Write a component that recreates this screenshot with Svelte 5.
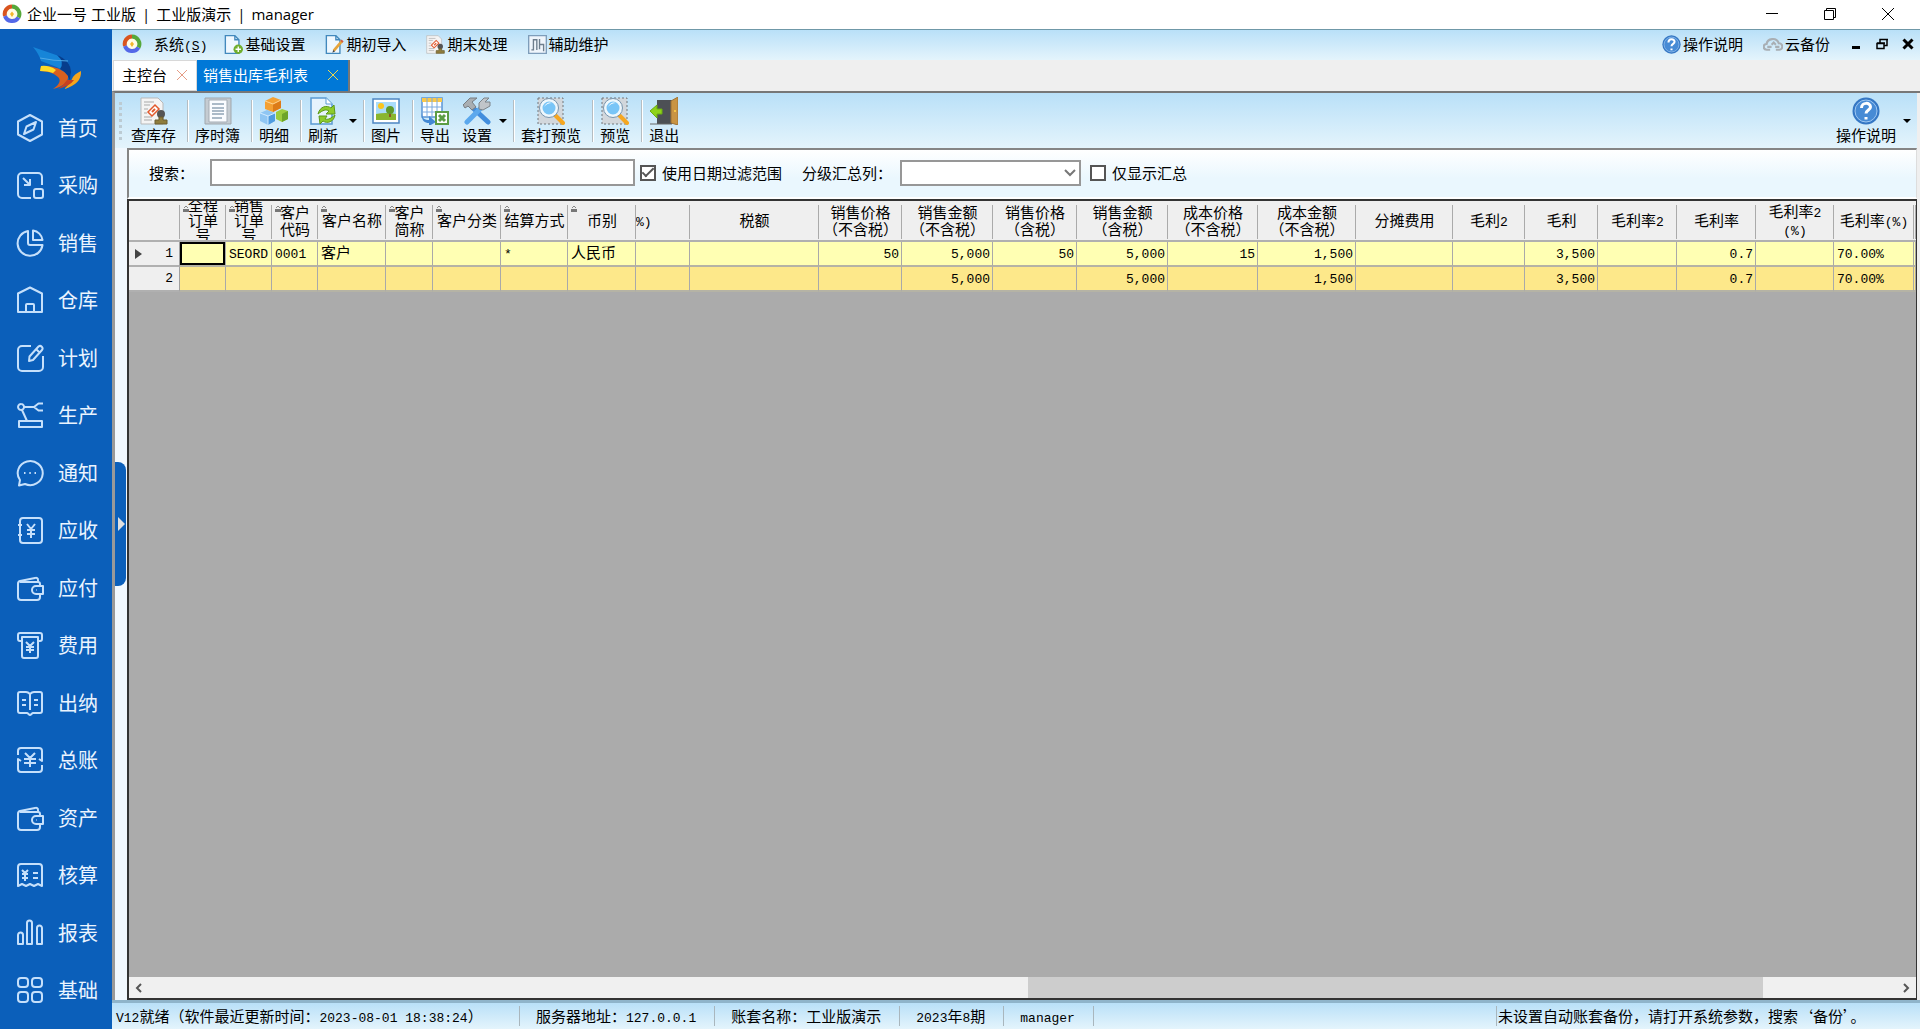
<script lang="ts">
	interface Column {
		lines: string[];
		width: number;
		locked?: boolean;
		numeric?: boolean;
		start?: boolean;
	}

	interface Tool {
		label: string;
		icon: string;
		drop?: boolean;
		tight?: boolean;
		joined?: boolean;
	}

	const modules = [
		{ label: '首页', d: 'M14 1 26 7.500V20.500L14 27 2 20.500V7.500ZM20 8 17.500 15.500 8 20 10.500 12.500ZM14 14h.1' },
		{ label: '采购', d: 'M26 14V6a4 4 0 0 0-4-4H6a4 4 0 0 0-4 4v17a4 4 0 0 0 4 4h9M7 7l7 7M14 8v6H8M20 18h5a2 2 0 0 1 2 2v5a2 2 0 0 1-2 2h-5a2 2 0 0 1-2-2v-5a2 2 0 0 1 2-2Z' },
		{ label: '销售', d: 'M12 2A12.500 12.500 0 1 0 26.500 16H14a2 2 0 0 1-2-2ZM17 1.500V11h9.500A11 11 0 0 0 17 1.500Z' },
		{ label: '仓库', d: 'M14 1.500 26 7.500V26H2V7.500ZM10 26v-7a1 1 0 0 1 1-1h6a1 1 0 0 1 1 1v7' },
		{ label: '计划', d: 'M15 2H6a4 4 0 0 0-4 4v17a4 4 0 0 0 4 4h17a4 4 0 0 0 4-4V12M22.500 2.500a2.500 2.500 0 0 1 3.500 3.500L17 16l-4 1 .5-4.500ZM20 5l4 4' },
		{ label: '生产', d: 'M3 20h23v6H3ZM5 3a3 3 0 1 0 .1 0M8 6h10M6 9l5 11M27 2.500h-4.500l-4.500 3.500 4.500 3.500H27' },
		{ label: '通知', d: 'M3 26.500 4 21A12.500 12 0 1 1 9 25ZM8 14h1.500M13.300 14h1.500M18.500 14h1.500' },
		{ label: '应收', d: 'M7 2h16a3 3 0 0 1 3 3v19a3 3 0 0 1-3 3H7a3 3 0 0 1-3-3V5a3 3 0 0 1 3-3ZM2 9h4M2 19h4M11 8l4 5 4-5M11 14h8M11 18h8M15 13v9' },
		{ label: '应付', d: 'M22 8V6a2 2 0 0 0-3-2L4 7a3 3 0 0 0-2 3v13a3 3 0 0 0 3 3h16a3 3 0 0 0 3-3v-3M4 8h18a2 2 0 0 1 2 2v2M27 12h-7a4 4 0 0 0 0 8h7ZM20 16h.5' },
		{ label: '费用', d: 'M6 10H4a2 2 0 0 1-2-2V4a2 2 0 0 1 2-2h20a2 2 0 0 1 2 2v4a2 2 0 0 1-2 2h-2M6 6h16v19a2 2 0 0 1-2 2H8a2 2 0 0 1-2-2ZM10 11l4 4 4-4M10 16h8M10 19h8M14 15v7' },
		{ label: '出纳', d: 'M14 5c-1-1-2-2-4-2H4a2 2 0 0 0-2 2v17a2 2 0 0 0 2 2h7c1 0 2 2 3 2s2-2 3-2h7a2 2 0 0 0 2-2V5a2 2 0 0 0-2-2h-6c-2 0-3 1-4 2ZM14 5v16M6 11h4M6 16h4M18 11h4M18 16h4' },
		{ label: '总账', d: 'M2 9V5a3 3 0 0 1 3-3h18a3 3 0 0 1 3 3v10l-3-2M26 19v4a3 3 0 0 1-3 3H5a3 3 0 0 1-3-3V13l3 2M9 7l5 5 5-5M8 13h12M8 17h12M14 12v9' },
		{ label: '资产', d: 'M22 8V6a2 2 0 0 0-3-2L4 7a3 3 0 0 0-2 3v13a3 3 0 0 0 3 3h16a3 3 0 0 0 3-3v-3M4 8h18a2 2 0 0 1 2 2v2M27 12h-7a4 4 0 0 0 0 8h7ZM20 16h.5' },
		{ label: '核算', d: 'M2 25V6a3 3 0 0 1 3-3h18a3 3 0 0 1 3 3v19l-4-2-4 2-4-2-4 2-4-2ZM6 9l3 3 3-3M6 13h6M6 17h6M9 12v8M17 12h5M17 17h5' },
		{ label: '报表', d: 'M2 16a2 2 0 0 1 5 0v9H2ZM11 4a2 2 0 0 1 5 0v21h-5ZM21 9a2 2 0 0 1 5 0v16h-5Z' },
		{ label: '基础', d: 'M5 2h4a3 3 0 0 1 3 3v3a3 3 0 0 1-3 3H5a3 3 0 0 1-3-3V5a3 3 0 0 1 3-3ZM19 2h4a3 3 0 0 1 3 3v3a3 3 0 0 1-3 3h-4a3 3 0 0 1-3-3V5a3 3 0 0 1 3-3ZM5 16h4a3 3 0 0 1 3 3v4a3 3 0 0 1-3 3H5a3 3 0 0 1-3-3v-4a3 3 0 0 1 3-3ZM19 16h4a3 3 0 0 1 3 3v4a3 3 0 0 1-3 3h-4a3 3 0 0 1-3-3v-4a3 3 0 0 1 3-3Z' }
	];

	const menus = [
		{ label: '基础设置', icon: 'page-add' },
		{ label: '期初导入', icon: 'page-edit' },
		{ label: '期末处理', icon: 'stamp' },
		{ label: '辅助维护', icon: 'wave' }
	];

	const tools: Tool[] = [
		{ label: '查库存', icon: 'stamp' },
		{ label: '序时簿', icon: 'journal' },
		{ label: '明细', icon: 'cubes' },
		{ label: '刷新', icon: 'refresh', drop: true },
		{ label: '图片', icon: 'picture' },
		{ label: '导出', icon: 'export', joined: true },
		{ label: '设置', icon: 'settings', drop: true, tight: true },
		{ label: '套打预览', icon: 'preview' },
		{ label: '预览', icon: 'preview' },
		{ label: '退出', icon: 'exit', joined: true }
	];

	const columns: Column[] = [
		{ lines: ['全程', '订单', '号'], width: 46, locked: true },
		{ lines: ['销售', '订单', '号'], width: 46, locked: true },
		{ lines: ['客户', '代码'], width: 46, locked: true },
		{ lines: ['客户名称'], width: 68, locked: true },
		{ lines: ['客户', '简称'], width: 47, locked: true },
		{ lines: ['客户分类'], width: 68, locked: true },
		{ lines: ['结算方式'], width: 67, locked: true },
		{ lines: ['币别'], width: 68, locked: true },
		{ lines: ['%)'], width: 54, numeric: true, start: true },
		{ lines: ['税额'], width: 129, numeric: true },
		{ lines: ['销售价格', '（不含税）'], width: 83, numeric: true },
		{ lines: ['销售金额', '（不含税）'], width: 91, numeric: true },
		{ lines: ['销售价格', '（含税）'], width: 84, numeric: true },
		{ lines: ['销售金额', '（含税）'], width: 91, numeric: true },
		{ lines: ['成本价格', '（不含税）'], width: 90, numeric: true },
		{ lines: ['成本金额', '（不含税）'], width: 98, numeric: true },
		{ lines: ['分摊费用'], width: 97, numeric: true },
		{ lines: ['毛利2'], width: 72, numeric: true },
		{ lines: ['毛利'], width: 73, numeric: true },
		{ lines: ['毛利率2'], width: 79, numeric: true },
		{ lines: ['毛利率'], width: 79, numeric: true },
		{ lines: ['毛利率2', '(%)'], width: 78, numeric: true },
		{ lines: ['毛利率(%)'], width: 80 }
	];

	const rows = [
		['', 'SEORD', '0001', '客户', '', '', '*', '人民币', '', '', '50', '5,000', '50', '5,000', '15', '1,500', '', '', '3,500', '', '0.7', '', '70.00%'],
		['', '', '', '', '', '', '', '', '', '', '', '5,000', '', '5,000', '', '1,500', '', '', '3,500', '', '0.7', '', '70.00%']
	];

	let keyword = $state('');
	let useDateRange = $state(true);
	let summaryOnly = $state(false);
	let selected = $state('0-0');

	// half-width runs use the narrower fixed-pitch face
	function runs(text: string) {
		return (text.match(/[\x20-\x7e]+|[^\x20-\x7e]+/g) ?? []).map((value) => ({
			value,
			half: /^[\x20-\x7e]/.test(value)
		}));
	}
</script>

{#snippet label(text: string)}
	{#each runs(text) as run}{#if run.half}<span class="half">{run.value}</span>{:else}{run.value}{/if}{/each}
{/snippet}

{#snippet ring(size: number)}
	<svg width={size} height={size} viewBox="0 0 20 20" fill="none" stroke-width="4" aria-hidden="true">
		<circle cx="10" cy="10" r="7" fill="#fffbe6" stroke="none" />
		<path d="M10 2.500A7.500 7.500 0 0 0 3 12" stroke="#d9541e" />
		<path d="M10 2.500A7.500 7.500 0 0 1 16.500 13.500" stroke="#56a83a" />
		<path d="M3 12A7.500 7.500 0 0 0 16.500 13.500" stroke="#5468e8" />
		<path d="M10 7.500l2 2.500-2 3-2-3Z" fill="#f2b72c" />
	</svg>
{/snippet}

{#snippet icon(name: string, size: number)}
	<svg width={size} height={size} viewBox="0 0 28 28" fill="none" aria-hidden="true">
		{#if name === 'stamp'}
			<path d="M1 1h17l5 5v21H1Z" fill="#f4f4f4" stroke="#b9b9b9" />
			<path d="M4 5h10M4 8h6M4 12h4M4 16h3M4 20h8M4 23h8" stroke="#a9a9a9" />
			<path d="m8 15 7-7 4 4-7 7Z" fill="#fff" stroke="#e2592c" stroke-width="1.500" />
			<path d="m12 15 3-3" stroke="#e2592c" stroke-width="2" />
			<circle cx="21" cy="17" r="4" fill="#555" />
			<path d="M19 20h4v3h4v4H15v-4h4Z" fill="#8f7c3c" stroke="#6b5d30" />
		{:else if name === 'journal'}
			<path d="M1 1h26v26H1Z" fill="#c5ccd2" stroke="#9fa7ad" />
			<path d="M5 3h18v22H5Z" fill="#fafcff" stroke="#a5adb5" />
			<path d="M8 7h12M8 11h12M8 14h12M8 17h12M8 21h10" stroke="#91a4b6" stroke-width="1.500" />
		{:else if name === 'cubes'}
			<path d="m16 15 6-3 6 2v8l-6 3-6-3Z" fill="#9ccc3e" />
			<path d="m22 17 6-3v8l-6 3Z" fill="#6da429" />
			<path d="m0 16 7-3 8 3v8l-7 4-8-4Z" fill="#8fc6f3" />
			<path d="m8 19 7-3v8l-7 4Z" fill="#4f9ce0" />
			<path d="m0 16 8 3 7-3M8 19v9" stroke="#d2ebff" />
			<path d="m5 4 8-4 8 3v8l-8 4-8-3Z" fill="#f4a033" />
			<path d="m13 7 8-4v8l-8 4Z" fill="#dd7b18" />
			<path d="m5 4 8 3 8-4" stroke="#ffd591" />
		{:else if name === 'refresh'}
			<path d="M2 1h15l6 6v20H2Z" fill="#e6f3fd" stroke="#5a9bd2" stroke-width="1.500" />
			<path d="M17 1v6h6" fill="#fff" stroke="#5a9bd2" />
			<path d="M9 17c2-8 9-9 13-6l3-3 1 9h-9l3-3c-3-2-6-1-11 3Z" fill="#8dcc2b" stroke="#5d991b" />
			<path d="M26 18c-1 7-8 9-12 6l-3 3-1-8h8l-2 3c4 1 6-1 10-4Z" fill="#8dcc2b" stroke="#5d991b" />
		{:else if name === 'picture'}
			<path d="M1 2h26v24H1Z" fill="#fff" stroke="#4e86c2" stroke-width="1.500" />
			<path d="M4 5h20v12H4Z" fill="#a9dcfb" />
			<path d="M4 17q10-2 20 0v6H4Z" fill="#8ab62f" />
			<circle cx="9" cy="9" r="3" fill="#fbc51e" />
			<path d="M18 14v6" stroke="#8a5525" stroke-width="2" />
			<circle cx="18" cy="13" r="4" fill="#5f9a2b" />
		{:else if name === 'export'}
			<path d="M1 1h20v19H1Z" fill="#fff" stroke="#5b95d5" stroke-width="1.500" />
			<path d="M1 1h20v4H1Z" fill="#f9c84b" />
			<path d="M1 10h20M1 15h20M6 1v19M11 1v19M16 1v19" stroke="#7baae0" />
			<path d="M1 16c0 6 3 7 7 7v-4l7 6-7 4v-3c-5 0-8-3-7-10Z" fill="#4388d3" />
			<path d="M15 15h12v12H15Z" fill="#fff" stroke="#5c9d43" stroke-width="2" />
			<path d="m18 18 6 6M24 18l-6 6" stroke="#5c9d43" stroke-width="3" />
		{:else if name === 'settings'}
			<path d="M10 11 25 25" stroke="#418ddd" stroke-width="5" stroke-linecap="round" />
			<path d="M18 11 4 25" stroke="#5ba8ed" stroke-width="5" stroke-linecap="round" />
			<path d="m0 8 7-7h7l-5 4 4 5-4 3-4-4-3 2Z" fill="#a9aeb2" stroke="#777d82" />
			<path d="M26 1h-5l-5 5v6l4 1 7-4V5h-5Z" fill="#c0c5c9" stroke="#7d8489" />
		{:else if name === 'preview'}
			<path d="M1 1h25v26H1Z" fill="#d2d7dc" stroke="#70777d" stroke-dasharray="2 2" />
			<path d="m18 18 8 8" stroke="#f5a722" stroke-width="4" stroke-linecap="round" />
			<circle cx="12" cy="11" r="8" fill="#79c5f7" stroke="#eef7fc" stroke-width="3" />
			<circle cx="12" cy="11" r="9.500" stroke="#7895ae" />
			<path d="M7 10q3-6 8-4-5 0-8 4Z" fill="#fff" />
		{:else if name === 'exit'}
			<path d="M7 3h15v24H7Z" fill="#4d5055" />
			<path d="m21 4 7-4v28l-7-2Z" fill="#c99443" stroke="#9c7134" />
			<path d="M24 14h2" stroke="#f6c445" stroke-width="2" />
			<path d="m0 14 7-6v4h5v5H7v4Z" fill="#8ed219" stroke="#6aab13" />
			<path d="M0 27h22" stroke="#666" />
		{:else if name === 'page-add' || name === 'page-edit'}
			<path d="M2 1h14l6 6v20H2Z" fill="#eff8ff" stroke="#4289bd" stroke-width="2" />
			<path d="M16 1v6h6" stroke="#4289bd" stroke-width="2" />
			{#if name === 'page-add'}
				<circle cx="21" cy="21" r="7" fill="#70ae2d" />
				<path d="M21 17v8M17 21h8" stroke="#fff" stroke-width="2" />
			{:else}
				<path d="M13 23 25 9" stroke="#e6a43a" stroke-width="4" />
				<path d="m11 26 1-4 3 2Z" fill="#444" />
				<path d="m24 10 2-2" stroke="#d25c42" stroke-width="4" />
			{/if}
		{:else if name === 'wave'}
			<path d="M1 1h26v26H1Z" fill="#eff5fb" stroke="#7e9dba" stroke-width="2" />
			<path d="M5 22h3V7h5v15M17 6v15M17 14h6v10" stroke="#6e7e8d" stroke-width="2" />
		{:else if name === 'help'}
			<circle cx="14" cy="14" r="13.500" fill="#3577c4" />
			<circle cx="14" cy="14" r="11" fill="#478bd5" stroke="#9fc8f2" />
			<path d="M9.500 11c0-6 9-6 9-1 0 3-4.500 3-4.500 6.500M14 20v2.500" stroke="#fff" stroke-width="3" />
		{:else if name === 'cloud'}
			<path d="M10 22H5a4 4 0 0 1 0-8c1-8 14-10 17-1a4.500 4.500 0 0 1 1 9h-5M6 18h6M17 18h6M12 15l3-3 3 3" stroke="#a9afb4" stroke-width="3" />
		{/if}
	</svg>
{/snippet}

<div class="window">
	<header class="titlebar">
		{@render ring(20)}
		<h1>
			<span>企业一号 工业版</span><span>|</span><span>工业版演示</span><span>|</span><span>manager</span>
		</h1>
		<div class="window-buttons">
			<button aria-label="最小化"><svg width="14" height="14" viewBox="0 0 14 14"><path d="M1 6.500h12" /></svg></button>
			<button aria-label="还原"><svg width="14" height="14" viewBox="0 0 14 14"><path d="M1.500 3.500h9v9h-9ZM3.500 3V1.500h9v9H11" /></svg></button>
			<button aria-label="关闭"><svg width="14" height="14" viewBox="0 0 14 14"><path d="m1 1 12 12M13 1 1 13" /></svg></button>
		</div>
	</header>

	<div class="body">
		<aside class="sidebar">
			<svg class="bird" width="50" height="46" viewBox="0 0 50 46" aria-hidden="true">
				<path d="M0 0 26 9q12 6 12 16l-1 9q-5-12-16-15L8 14Q6 7 0 0Z" fill="#1685d8" />
				<path d="M24 8q14 6 14 17l-1 9q-3-8-10-12 5-7-3-14Z" fill="#073d8c" />
				<path d="M7 11q14 3 28 3" stroke="#4fa9e6" fill="none" />
				<path d="M8 19q19-1 27 10 1 9-15 13 10-7 5-12-6-6-18-6Z" fill="#d9601f" />
				<path d="M8 19q8-1 15 4l-3 3q-5-2-13-2Z" fill="#ffdc27" />
				<path d="M48 24q1 13-17 18 4-3 8-10 2-5 9-8Z" fill="#f6a51b" />
				<path d="M41 33q-4 6-16 9 6-4 9-9Z" fill="#c8401f" />
			</svg>
			<nav>
				{#each modules as item}
					<a href="#top">
						<svg width="28" height="28" viewBox="0 0 28 28" aria-hidden="true"><path d={item.d} /></svg>
						<span>{item.label}</span>
					</a>
				{/each}
			</nav>
		</aside>

		<div class="workspace">
			<div class="menubar">
				<button class="menu system">{@render ring(20)}<span>系统<span class="half">(<u>S</u>)</span></span></button>
				{#each menus as menu}
					<button class="menu">{@render icon(menu.icon, 19)}{menu.label}</button>
				{/each}
				<div class="menubar-end">
					<button class="menu">{@render icon('help', 19)}操作说明</button>
					<button class="menu">{@render icon('cloud', 20)}云备份</button>
					<div class="mdi">
						<button aria-label="最小化子窗口"><svg width="12" height="12" viewBox="0 0 12 12"><path d="M2 9.500h8" stroke-width="3" /></svg></button>
						<button aria-label="还原子窗口"><svg width="12" height="12" viewBox="0 0 12 12"><path d="M1 5.500h7v5H1ZM4 5V1.500h7v6H8M1 5h8M4 1.500h8" stroke-width="1.500" /></svg></button>
						<button aria-label="关闭子窗口"><svg width="12" height="12" viewBox="0 0 12 12"><path d="m1.500 1.500 9 9M10.500 1.500l-9 9" stroke-width="3" /></svg></button>
					</div>
				</div>
			</div>

			<div class="tabs">
				<div class="tab">
					<button class="tab-name">主控台</button>
					<button class="tab-close" aria-label="关闭主控台"><svg width="12" height="12" viewBox="0 0 12 12"><path d="m1 1 10 10M11 1 1 11" /></svg></button>
				</div>
				<div class="tab active">
					<button class="tab-name">销售出库毛利表</button>
					<button class="tab-close" aria-label="关闭销售出库毛利表"><svg width="12" height="12" viewBox="0 0 12 12"><path d="m1 1 10 10M11 1 1 11" /></svg></button>
				</div>
			</div>

			<div class="document">
				<div class="toolbar">
					<span class="grip"></span>
					{#each tools as tool}
						<button class="tool">{@render icon(tool.icon, 28)}<span>{tool.label}</span></button>
						{#if tool.drop}
							<button class="drop" class:tight={tool.tight} aria-label="{tool.label}选项"></button>
						{/if}
						{#if !tool.joined}
							<span class="divider"></span>
						{/if}
					{/each}
					<div class="toolbar-end">
						<button class="tool">{@render icon('help', 28)}<span>操作说明</span></button>
						<button class="drop tight" aria-label="操作说明选项"></button>
					</div>
				</div>

				<div class="content">
					<div class="gutter">
						<button class="handle" aria-label="展开面板"></button>
					</div>
					<main>
						<form class="filter">
							<label class="keyword" for="keyword">搜索：</label>
							<input id="keyword" class="search" type="text" bind:value={keyword} />
							<label class="check"><input type="checkbox" bind:checked={useDateRange} />使用日期过滤范围</label>
							<label class="level" for="level">分级汇总列：</label>
							<div class="select">
								<select id="level"><option value=""></option></select>
								<svg width="12" height="8" viewBox="0 0 12 8" aria-hidden="true"><path d="m1 1 5 5 5-5" /></svg>
							</div>
							<label class="check"><input type="checkbox" bind:checked={summaryOnly} />仅显示汇总</label>
						</form>

						<div class="grid">
							<div class="grid-view">
								<table>
									<colgroup>
										<col style="width: 51px" />
										{#each columns as column}
											<col style="width: {column.width}px" />
										{/each}
										<col />
									</colgroup>
									<thead>
										<tr>
											<th></th>
											{#each columns as column}
												<th>
													<div class="caption" class:start={column.start} class:dense={column.lines.length > 2}>
														{#each column.lines as line}<span>{@render label(line)}</span>{/each}
													</div>
													{#if column.locked}
														<svg class="lock" width="8" height="8" viewBox="0 0 8 8" aria-hidden="true"><path d="M2 3 4 1l2 2" fill="none" stroke="#888" /><path d="M1 4h6v3H1Z" fill="#777" /></svg>
													{/if}
												</th>
											{/each}
											<th></th>
										</tr>
									</thead>
									<tbody>
										{#each rows as row, r}
											<tr class:total={r === rows.length - 1}>
												<th scope="row">
													<div class="row-head" class:current={r === 0}><span class="half">{r + 1}</span></div>
												</th>
												{#each row as cell, c}
													<td
														class:numeric={columns[c].numeric}
														class:selected={selected === `${r}-${c}`}
														onclick={() => (selected = `${r}-${c}`)}
													>{@render label(cell)}</td>
												{/each}
												<td></td>
											</tr>
										{/each}
									</tbody>
								</table>
							</div>
							<div class="hscroll">
								<button aria-label="向左滚动"><svg width="8" height="10" viewBox="0 0 8 10"><path d="M6 1 2 5l4 4" /></svg></button>
								<span class="before"></span>
								<span class="thumb"></span>
								<span class="after"></span>
								<button aria-label="向右滚动"><svg width="8" height="10" viewBox="0 0 8 10"><path d="m2 1 4 4-4 4" /></svg></button>
							</div>
						</div>
					</main>
				</div>
			</div>

			<footer class="status">
				<span class="ready">{@render label('V12就绪（软件最近更新时间：2023-08-01 18:38:24）')}</span>
				<span>{@render label('服务器地址：127.0.0.1')}</span>
				<span>账套名称：工业版演示</span>
				<span>{@render label('2023年8期')}</span>
				<span>{@render label('manager')}</span>
				<span class="notice">未设置自动账套备份，请打开系统参数，搜索‘备份’。</span>
			</footer>
		</div>
	</div>
</div>

<style>
	:global(body) {
		margin: 0;
	}

	.window {
		display: flex;
		flex-direction: column;
		height: 100vh;
		overflow: hidden;
		background: #fff;
		color: #000;
		font-family: 'Noto Sans CJK SC', sans-serif;
		font-size: 15px;
		line-height: 20px;
	}

	.window * {
		box-sizing: border-box;
	}

	button,
	input,
	select {
		margin: 0;
		padding: 0;
		border: 0;
		background: none;
		color: inherit;
		font: inherit;
	}

	svg {
		display: block;
		flex: none;
	}

	.half {
		font-family: 'Liberation Mono', monospace;
		font-size: 13px;
		line-height: 13px;
	}

	.titlebar {
		display: flex;
		align-items: center;
		height: 29px;
		flex: none;
		padding: 0 0 2px 2px;
		gap: 5px;
	}

	.titlebar h1 {
		display: flex;
		gap: 6px;
		margin: 0;
		font-family: 'Open Sans', 'Noto Sans CJK SC', sans-serif;
		font-size: 15px;
		font-weight: 400;
	}

	.window-buttons {
		display: flex;
		margin-left: auto;
		padding-right: 3px;
	}

	.window-buttons button {
		display: flex;
		justify-content: center;
		width: 58px;
	}

	.window-buttons path {
		fill: none;
		stroke: #000;
	}

	.body {
		display: flex;
		flex: 1;
		min-height: 0;
	}

	.sidebar {
		display: flex;
		flex-direction: column;
		width: 112px;
		flex: none;
		padding: 18px 0 10px;
		background: #0b5fba;
	}

	.bird {
		margin-left: 33px;
	}

	nav {
		display: flex;
		flex-direction: column;
		flex: 1;
		padding-top: 6px;
	}

	nav a {
		display: flex;
		flex: 1;
		align-items: center;
		gap: 14px;
		padding-left: 16px;
		color: #eaf4ff;
		font-size: 20px;
		line-height: 24px;
		text-decoration: none;
	}

	nav path {
		fill: none;
		stroke: #c6e0fb;
		stroke-width: 2;
		stroke-linejoin: round;
	}

	.workspace {
		display: flex;
		flex-direction: column;
		flex: 1;
		min-width: 0;
		background: #efefef;
	}

	.menubar {
		display: flex;
		align-items: center;
		height: 31px;
		flex: none;
		padding: 0 6px 2px 10px;
		border-top: 1px solid #6f98a8;
		background: linear-gradient(#b9e0f8, #e4f4fc);
	}

	.menu {
		display: flex;
		align-items: center;
		gap: 2px;
		margin-right: 20px;
		white-space: nowrap;
	}

	.menu.system {
		gap: 12px;
		margin-right: 17px;
	}

	.menubar-end {
		display: flex;
		align-items: center;
		margin-left: auto;
	}

	.mdi {
		display: flex;
		gap: 14px;
	}

	.mdi path {
		fill: none;
		stroke: #000;
	}

	.tabs {
		display: flex;
		align-items: stretch;
		height: 31px;
		flex: none;
		padding-left: 1px;
	}

	.tab {
		display: flex;
		align-items: center;
		gap: 9px;
		padding: 0 8px 1px;
		border: 1px solid #d8d8d8;
		background: #fff;
	}

	.tab.active {
		gap: 19px;
		padding: 0 9px 1px 6px;
		border: 0;
		border-right: 2px solid #777;
		background: #0078d7;
		color: #fff;
	}

	.tab-close path {
		fill: none;
		stroke: #e59b84;
	}

	.tab.active .tab-close path {
		stroke: #f0d84a;
	}

	.document {
		display: flex;
		flex-direction: column;
		flex: 1;
		min-height: 0;
		border-top: 2px solid #777;
		border-left: 3px solid #999;
		padding-right: 3px;
	}

	.toolbar {
		display: flex;
		align-items: center;
		height: 55px;
		flex: none;
		padding-left: 4px;
		background: linear-gradient(#b9e0f8, #e4f4fc);
	}

	.grip {
		width: 6px;
		height: 38px;
		border-left: 3px dotted #bccbd3;
	}

	.tool {
		display: flex;
		flex-direction: column;
		align-items: center;
		padding: 0 6px;
		line-height: 20px;
		white-space: nowrap;
	}

	.drop {
		width: 14px;
		height: 40px;
	}

	.drop::before {
		content: '';
		display: block;
		width: 0;
		margin-left: 5px;
		border: 4px solid transparent;
		border-top-color: #000;
		border-bottom: 0;
	}

	.drop.tight {
		width: 10px;
	}

	.drop.tight::before {
		margin-left: 1px;
	}

	.divider {
		width: 2px;
		height: 42px;
		margin-left: 5px;
		border-left: 1px solid #b5bdc2;
		border-right: 1px solid #fff;
	}

	.toolbar-end {
		display: flex;
		align-items: center;
		margin-left: auto;
		padding-right: 5px;
	}

	.content {
		display: flex;
		flex: 1;
		min-height: 0;
	}

	.gutter {
		display: flex;
		flex-direction: column;
		justify-content: center;
		width: 12px;
		flex: none;
		padding: 0 1px 100px 0;
		background: #f1f8fe;
	}

	.handle {
		display: flex;
		align-items: center;
		height: 124px;
		border-radius: 0 8px 8px 0;
		background: #0b5fba;
	}

	.handle::before {
		content: '';
		margin-left: 3px;
		border: 7px solid transparent;
		border-left-color: #e0e0e0;
		border-right: 0;
	}

	main {
		display: flex;
		flex-direction: column;
		flex: 1;
		min-width: 0;
	}

	.filter {
		display: flex;
		align-items: center;
		height: 51px;
		flex: none;
		padding: 0 0 2px 20px;
		border: 2px solid #858585;
		border-right: 1px solid #ddd;
		border-bottom: 2px solid #fff;
		background: linear-gradient(#fff, #eaf7fe 60%);
	}

	.keyword {
		width: 61px;
	}

	.search {
		width: 425px;
		height: 27px;
		padding: 0 4px;
		border: 2px solid #979797;
		background: #fff;
	}

	.check {
		display: flex;
		align-items: center;
		gap: 6px;
		margin-left: 5px;
	}

	.check input {
		display: grid;
		place-items: center;
		width: 16px;
		height: 16px;
		border: 2px solid #555;
		background: #fff;
		appearance: none;
	}

	.check input:checked::before {
		content: '';
		width: 10px;
		height: 4px;
		margin-top: -3px;
		border: 2px solid #555;
		border-width: 0 0 2px 2px;
		transform: rotate(-45deg);
	}

	.level {
		width: 98px;
		margin-left: 20px;
	}

	.select {
		display: grid;
		align-items: center;
		width: 181px;
		margin-right: 4px;
	}

	.select > * {
		grid-area: 1 / 1;
	}

	.select select {
		width: 100%;
		height: 26px;
		border: 2px solid #979797;
		background: #fff;
		appearance: none;
	}

	.select svg {
		justify-self: end;
		margin-right: 5px;
		pointer-events: none;
	}

	.select path {
		fill: none;
		stroke: #777;
		stroke-width: 2;
	}

	.grid {
		display: flex;
		flex-direction: column;
		flex: 1;
		min-height: 0;
		border: 2px solid #333;
		border-right-width: 1px;
		background: #ababab;
	}

	.grid-view {
		flex: 1;
		min-height: 0;
		overflow: hidden;
	}

	table {
		width: 100%;
		border-spacing: 0;
		table-layout: fixed;
	}

	th,
	td {
		padding: 0;
		border-bottom: 2px solid #b0b0b0;
		font-weight: 400;
		white-space: nowrap;
	}

	thead th {
		position: relative;
		height: 41px;
		background: linear-gradient(#aaa, #aaa) right 4px / 1px 34px no-repeat #efefef;
	}

	.caption {
		display: flex;
		flex-direction: column;
		align-items: center;
		justify-content: center;
		height: 39px;
		padding-bottom: 2px;
		overflow: hidden;
		line-height: 17px;
	}

	.caption span {
		flex: none;
	}

	.caption.start {
		align-items: flex-start;
	}

	.caption.dense {
		line-height: 15px;
	}

	.lock {
		position: absolute;
		top: 4px;
		left: 2px;
	}

	td,
	tbody th {
		height: 25px;
		line-height: 20px;
		vertical-align: top;
	}

	td {
		padding: 0 2px 0 3px;
		border-right: 1px solid #a9a9a9;
		border-bottom: 2px solid #b5b3a5;
		background: #ffffb3;
		overflow: hidden;
	}

	tbody th {
		border-right: 1px solid #a0a0a0;
		background: #efefef;
	}

	.total td {
		background: #fde88a;
	}

	.numeric {
		text-align: right;
	}

	.selected {
		box-shadow: inset 0 0 0 2px #000;
	}

	.row-head {
		display: flex;
		align-items: center;
		justify-content: flex-end;
		height: 23px;
		padding: 0 6px;
	}

	.row-head.current::before {
		content: '';
		margin-right: auto;
		border: 5px solid transparent;
		border-left: 7px solid #444;
		border-right: 0;
	}

	.hscroll {
		display: flex;
		height: 21px;
		flex: none;
		background: #f0f0f0;
	}

	.hscroll button {
		display: grid;
		place-items: center;
		width: 20px;
	}

	.hscroll path {
		fill: none;
		stroke: #555;
		stroke-width: 2;
	}

	.before {
		flex: 879;
	}

	.thumb {
		flex: 735;
		background: #cdcdcd;
	}

	.after {
		flex: 133;
	}

	.status {
		display: flex;
		align-items: center;
		height: 29px;
		flex: none;
		padding-bottom: 1px;
		border-top: 3px solid #8fb4ca;
		background: linear-gradient(#b9e0f8, #e4f4fc);
		white-space: nowrap;
	}

	.status > span {
		padding: 0 18px 0 16px;
		border-right: 1px solid #a9b6bd;
	}

	.status > .ready {
		width: 408px;
		padding-left: 4px;
	}

	.status > .notice {
		width: 424px;
		margin-left: auto;
		padding: 0 0 0 1px;
		border-right: 0;
		border-left: 1px solid #a9b6bd;
	}
</style>
